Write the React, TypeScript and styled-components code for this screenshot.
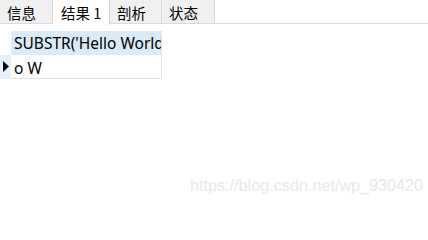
import React from "react";
import styled, { createGlobalStyle } from "styled-components";

const Global = createGlobalStyle`
  html, body { margin: 0; padding: 0; background: #ffffff; }
  body { width: 428px; height: 204px; overflow: hidden; position: relative; }
`;

const Page = styled.div`
  width: 428px;
  height: 204px;
  position: relative;
  background: #fff;
  font-family: "Noto Sans CJK SC", "Noto Sans", sans-serif;
`;

const TabBar = styled.div`
  display: flex;
  height: 24px;
  border-bottom: 1px solid #dadada;
  box-sizing: border-box;
`;

const Tab = styled.div<{ $active?: boolean; $w: number }>`
  width: ${(p) => p.$w}px;
  height: ${(p) => (p.$active ? 25 : 24)}px;
  box-sizing: border-box;
  background: ${(p) => (p.$active ? "#ffffff" : "#f0f0f0")};
  border-right: 1px solid #d9d9d9;
  border-bottom: ${(p) => (p.$active ? "none" : "1px solid #dadada")};
  font-size: 14.5px;
  line-height: 25px;
  color: #000;
  padding-left: ${(p) => (p.$active ? 8 : 7)}px;
  position: relative;
  z-index: 1;
  white-space: nowrap;
`;

const Grid = styled.div`
  display: grid;
  grid-template-columns: 11px 151px;
  grid-template-rows: 24px 24px;
  margin-top: 7px;
  font-family: "Noto Sans", "Noto Sans CJK SC", sans-serif;
`;

const Corner = styled.div`
  background: #ffffff;
`;

const Indicator = styled.div`
  background: #e6f0fa;
  display: flex;
  align-items: center;
  justify-content: flex-start;
  padding-left: 3px;
  border-bottom: 1px solid #ececec;
  box-sizing: border-box;
`;

const HeaderCell = styled.div`
  background: #daeaf7;
  font-size: 15.5px;
  line-height: 24px;
  padding-left: 3px;
  overflow: hidden;
  white-space: nowrap;
  color: #000;
  border-right: 1px solid #e4e4e4;
  box-sizing: border-box;
`;

const DataCell = styled.div`
  background: #ffffff;
  font-size: 15.5px;
  line-height: 27px;
  padding-left: 3px;
  overflow: hidden;
  white-space: nowrap;
  color: #000;
  border-right: 1px solid #e4e4e4;
  border-bottom: 1px solid #e4e4e4;
  box-sizing: border-box;
`;

const Watermark = styled.div`
  position: absolute;
  left: 190px;
  top: 176px;
  font-family: "Liberation Sans", Arial, sans-serif;
  font-size: 16.2px;
  color: #e8e8e8;
`;

export default function App() {
  return (
    <Page>
      <Global />
      <TabBar>
        <Tab $w={53}>信息</Tab>
        <Tab $w={57} $active>结果 1</Tab>
        <Tab $w={52}>剖析</Tab>
        <Tab $w={53}>状态</Tab>
      </TabBar>
      <Grid>
        <Corner />
        <HeaderCell>SUBSTR('Hello World',5,3)</HeaderCell>
        <Indicator>
          <svg width="6" height="11" viewBox="0 0 6 11">
            <path d="M0 0 L6 5.5 L0 11 Z" fill="#000" />
          </svg>
        </Indicator>
        <DataCell>o W</DataCell>
      </Grid>
      <Watermark>https://blog.csdn.net/wp_930420</Watermark>
    </Page>
  );
}
